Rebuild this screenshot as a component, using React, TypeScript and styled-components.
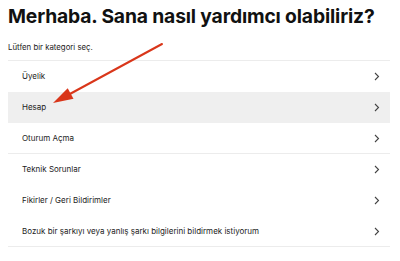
import styled, { createGlobalStyle } from "styled-components";

const GlobalStyle = createGlobalStyle`
  html, body {
    margin: 0;
    padding: 0;
    background: #fff;
  }
  body {
    font-family: Inter, "Noto Sans", sans-serif;
    color: #181818;
  }
`;

const Page = styled.div`
  position: relative;
  width: 400px;
  height: 261px;
  padding: 4px 10px 0 8px;
  box-sizing: border-box;
  overflow: hidden;
`;

const Title = styled.h1`
  margin: 0;
  font-size: 19.3px;
  font-weight: 700;
  letter-spacing: -0.15px;
  line-height: 24px;
  white-space: nowrap;
  color: #111;
`;

const Subtitle = styled.p`
  margin: 14px 0 0;
  font-size: 7.8px;
  line-height: 10px;
  color: #222;
`;

const List = styled.ul`
  list-style: none;
  margin: 8px 0 0;
  padding: 0;
  border-top: 1px solid #ececec;
`;

const Row = styled.li<{ $active?: boolean; $divided?: boolean }>`
  display: flex;
  align-items: center;
  justify-content: space-between;
  height: 31px;
  padding: 0 10px 0 14px;
  box-sizing: border-box;
  background: ${(p) => (p.$active ? "#efefef" : "transparent")};
  border-bottom: 1px solid ${(p) => (p.$divided ? "#ececec" : "transparent")};
  font-size: 8px;
  color: #222;
`;

const Chevron = styled.svg`
  width: 6px;
  height: 9px;
  flex: none;
`;

const Arrow = styled.svg`
  position: absolute;
  left: 0;
  top: 0;
  pointer-events: none;
`;

const items = [
  { label: "Üyelik", divided: false },
  { label: "Hesap", active: true, divided: false },
  { label: "Oturum Açma", divided: true },
  { label: "Teknik Sorunlar", divided: false },
  { label: "Fikirler / Geri Bildirimler", divided: false },
  { label: "Bozuk bir şarkıyı veya yanlış şarkı bilgilerini bildirmek istiyorum", divided: true },
];

export default function App() {
  return (
    <>
      <GlobalStyle />
      <Page>
        <Title>Merhaba. Sana nasıl yardımcı olabiliriz?</Title>
        <Subtitle>Lütfen bir kategori seç.</Subtitle>
        <List>
          {items.map((it) => (
            <Row key={it.label} $active={it.active} $divided={it.divided}>
              <span>{it.label}</span>
              <Chevron viewBox="0 0 6 9">
                <path d="M1 1l3.5 3.5L1 8" fill="none" stroke="#444" strokeWidth="1.1" />
              </Chevron>
            </Row>
          ))}
        </List>
        <Arrow width="400" height="261" viewBox="0 0 400 261">
          <line x1="162" y1="44" x2="68" y2="95" stroke="#d9361a" strokeWidth="2" strokeLinecap="round" />
          <polygon points="53,103 73.5,98.8 67.7,88.2" fill="#d9361a" />
        </Arrow>
      </Page>
    </>
  );
}
